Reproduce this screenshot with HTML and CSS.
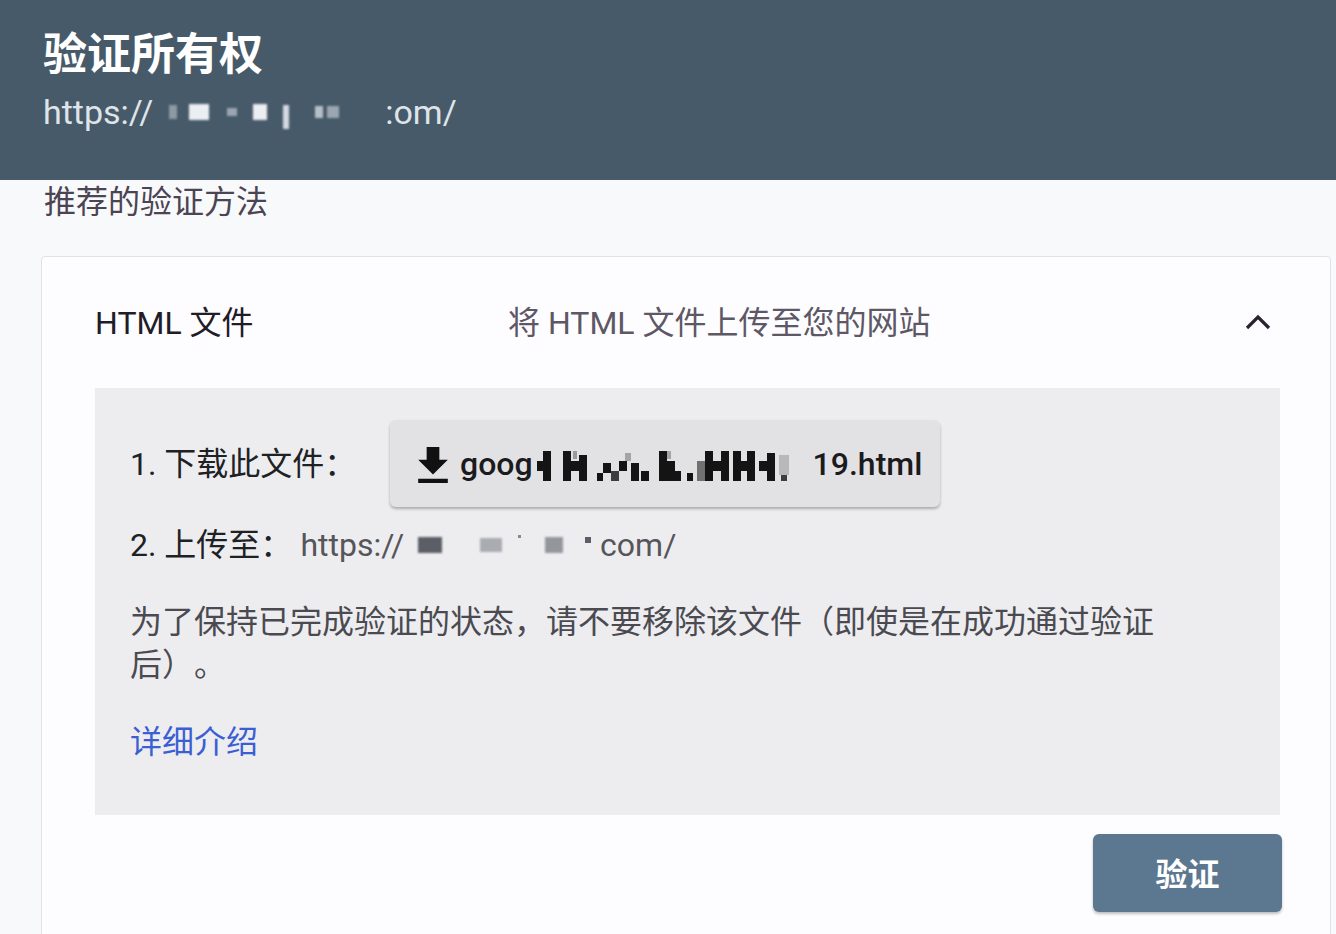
FILE: index.html
```html
<!DOCTYPE html>
<html lang="zh-CN">
<head>
<meta charset="utf-8">
<title>验证所有权</title>
<link rel="stylesheet" href="styles.css">
</head>
<body>
<header class="top">
  <h1 class="title">验证所有权</h1>
  <div class="site">https://<span class="mask"><i class="m1"></i><i class="m2"></i><i class="m3"></i><i class="m4"></i><i class="m5"></i><i class="m6"></i><i class="m7"></i></span>:om/</div>
</header>
<main class="content">
  <div class="section-label">推荐的验证方法</div>
  <section class="card">
    <div class="card-head">
      <div class="card-title">HTML 文件</div>
      <div class="card-desc">将 HTML 文件上传至您的网站</div>
      <div class="chevron">
        <svg viewBox="0 0 24 24" width="48" height="48"><path d="M6.5 15.5 12 10l5.5 5.5" fill="none" stroke="#2a2230" stroke-width="1.6"/></svg>
      </div>
    </div>
    <div class="panel">
      <div class="step step-one">
        <span class="step-label">1. 下载此文件：</span>
        <button class="download">
          <svg class="dl-icon" viewBox="5 3 14 17" width="30" height="36"><path d="M19 9h-4V3H9v6H5l7 7 7-7zM5 18v2h14v-2H5z" fill="#111"/></svg>
          <span>goog</span>
          <svg class="mosaic" viewBox="0 0 262 30" width="262" height="30">
            <g fill="#141414">
              <rect x="0" y="10" width="6" height="10"/>
              <rect x="6" y="0" width="8" height="30"/>
              <rect x="26" y="0" width="8" height="30"/>
              <rect x="34" y="10" width="8" height="10"/>
              <rect x="42" y="4" width="8" height="26"/>
              <rect x="36" y="0" width="4" height="8" opacity=".35"/>
              <rect x="60" y="22" width="6" height="8"/>
              <rect x="66" y="12" width="8" height="10"/>
              <rect x="74" y="20" width="8" height="10" opacity=".8"/>
              <rect x="82" y="10" width="8" height="10"/>
              <rect x="88" y="2" width="6" height="8" opacity=".3"/>
              <rect x="94" y="12" width="8" height="18"/>
              <rect x="104" y="20" width="8" height="10"/>
              <rect x="122" y="0" width="8" height="30"/>
              <rect x="130" y="10" width="8" height="20"/>
              <rect x="130" y="0" width="4" height="8" opacity=".3"/>
              <rect x="138" y="20" width="6" height="10"/>
              <rect x="150" y="22" width="6" height="8"/>
              <rect x="160" y="10" width="8" height="20" opacity=".55"/>
              <rect x="168" y="0" width="8" height="30"/>
              <rect x="176" y="10" width="8" height="10"/>
              <rect x="184" y="0" width="8" height="30"/>
              <rect x="196" y="0" width="8" height="30"/>
              <rect x="204" y="10" width="6" height="10"/>
              <rect x="210" y="0" width="8" height="30"/>
              <rect x="222" y="10" width="8" height="10"/>
              <rect x="230" y="2" width="8" height="28"/>
              <rect x="242" y="4" width="10" height="20" opacity=".2"/>
              <rect x="244" y="24" width="6" height="6" opacity=".8"/>
            </g>
          </svg>
          <span class="gap"></span><span>19.html</span>
        </button>
      </div>
      <div class="step step-two">
        <span class="step-label">2. 上传至：</span>
        <span class="url">https://<span class="mask2"><i class="n1"></i><i class="n2"></i><i class="n3"></i><i class="n4"></i><i class="n5"></i></span>com/</span>
      </div>
      <p class="note">为了保持已完成验证的状态，请不要移除该文件（即使是在成功通过验证后）。</p>
      <a class="more" href="#">详细介绍</a>
    </div>
    <div class="actions">
      <button class="verify">验证</button>
    </div>
  </section>
</main>
</body>
</html>
```
FILE: styles.css
```css
html, body {
  margin: 0;
  padding: 0;
  background: #f8f9fb;
  font-family: Roboto, "Noto Sans CJK SC", sans-serif;
  text-spacing-trim: space-all;
  overflow: hidden;
}
.top {
  background: #475a6a;
  height: 180px;
  box-sizing: border-box;
  padding: 27px 43px 0;
}
.title {
  margin: 0;
  color: #ffffff;
  font-size: 44px;
  font-weight: 700;
  line-height: 56px;
}
.site {
  margin-top: 7px;
  color: #dfe4e9;
  font-size: 34px;
  line-height: 44px;
  display: flex;
  align-items: center;
}
.mask {
  display: inline-flex;
  align-items: center;
  width: 232px;
  height: 30px;
  filter: blur(0.8px);
}
.mask i {
  display: inline-block;
  background: #d3d9df;
}
.mask .m1 { width: 8px; height: 14px; margin-left: 16px; opacity: .5; }
.mask .m2 { width: 20px; height: 16px; margin-left: 12px; background: #eceff2; }
.mask .m3 { width: 10px; height: 8px; margin-left: 18px; opacity: .6; }
.mask .m4 { width: 14px; height: 16px; margin-left: 16px; background: #eceff2; }
.mask .m5 { width: 6px; height: 24px; margin-left: 16px; margin-top: 10px; }
.mask .m6 { width: 8px; height: 12px; margin-left: 26px; opacity: .8; }
.mask .m7 { width: 12px; height: 12px; margin-left: 4px; opacity: .6; }

.content {
  padding: 2px 5px 0 41px;
}
.section-label {
  color: #4b4453;
  font-size: 32px;
  line-height: 40px;
  padding-left: 3px;
}
.card {
  margin-top: 34px;
  width: 1290px;
  box-sizing: border-box;
  background: #fdfdff;
  border: 1px solid #e1e2e6;
  border-radius: 4px;
  padding: 0 50px 40px 53px;
}
.card-head {
  height: 131px;
  display: flex;
  align-items: center;
}
.card-title {
  width: 413px;
  color: #221c27;
  font-size: 32px;
  padding-bottom: 6px;
}
.card-desc {
  flex: 1;
  color: #5e5866;
  font-size: 32px;
  padding-bottom: 6px;
}
.chevron {
  width: 48px;
  height: 48px;
  margin-right: -2px;
  margin-bottom: 4px;
}
.chevron svg { display: block; }

.panel {
  background: #ededf0;
  height: 427px;
  box-sizing: border-box;
  padding: 32px 35px 0;
}
.step {
  display: flex;
  align-items: center;
  color: #202124;
  font-size: 32px;
}
.step-label { white-space: nowrap; }
.step-one .step-label { width: 260px; padding-bottom: 6px; }
.download {
  display: flex;
  align-items: center;
  width: 550px;
  height: 87px;
  box-sizing: border-box;
  padding: 0 0 0 28px;
  border: none;
  border-radius: 6px;
  background: #e2e2e5;
  box-shadow: 0 2px 3px rgba(0,0,0,.28);
  font-family: Roboto, "Noto Sans CJK SC", sans-serif;
  font-size: 32px;
  font-weight: 500;
  color: #1b1b1d;
}
.dl-icon { margin-right: 12px; margin-top: 2px; }
.mosaic { margin-left: 4px; margin-top: 4px; filter: blur(0.7px); }
.gap { display: inline-block; width: 14px; }

.step-two { margin-top: 16px; line-height: 44px; }
.url {
  color: #55555a;
  display: inline-flex;
  align-items: center;
  margin-left: 8px;
}
.mask2 {
  display: inline-flex;
  align-items: center;
  width: 196px;
  height: 30px;
}
.mask2 i { display: inline-block; background: #5b5e66; }
.mask2 .n1 { width: 24px; height: 16px; margin-left: 14px; filter: blur(1px); }
.mask2 .n2 { width: 22px; height: 14px; margin-left: 38px; opacity: .45; filter: blur(1.2px); }
.mask2 .n3 { width: 3px; height: 3px; margin-left: 16px; margin-top: -18px; opacity: .7; }
.mask2 .n4 { width: 18px; height: 16px; margin-left: 24px; opacity: .6; filter: blur(1px); }
.mask2 .n5 { width: 6px; height: 6px; margin-left: 22px; margin-top: -10px; }

.note {
  margin: 34px 0 0;
  max-width: 1040px;
  color: #4a4a50;
  font-size: 32px;
  line-height: 43px;
}
.more {
  display: inline-block;
  margin-top: 34px;
  color: #3b5fd3;
  font-size: 32px;
  line-height: 43px;
  text-decoration: none;
}
.actions {
  display: flex;
  justify-content: flex-end;
  margin-top: 19px;
  margin-right: -2px;
}
.verify {
  width: 189px;
  height: 78px;
  border: none;
  border-radius: 6px;
  background: #5c7890;
  box-shadow: 0 2px 3px rgba(0,0,0,.25);
  color: #ffffff;
  font-family: Roboto, "Noto Sans CJK SC", sans-serif;
  font-size: 32px;
  font-weight: 700;
  padding-bottom: 4px;
}
```
